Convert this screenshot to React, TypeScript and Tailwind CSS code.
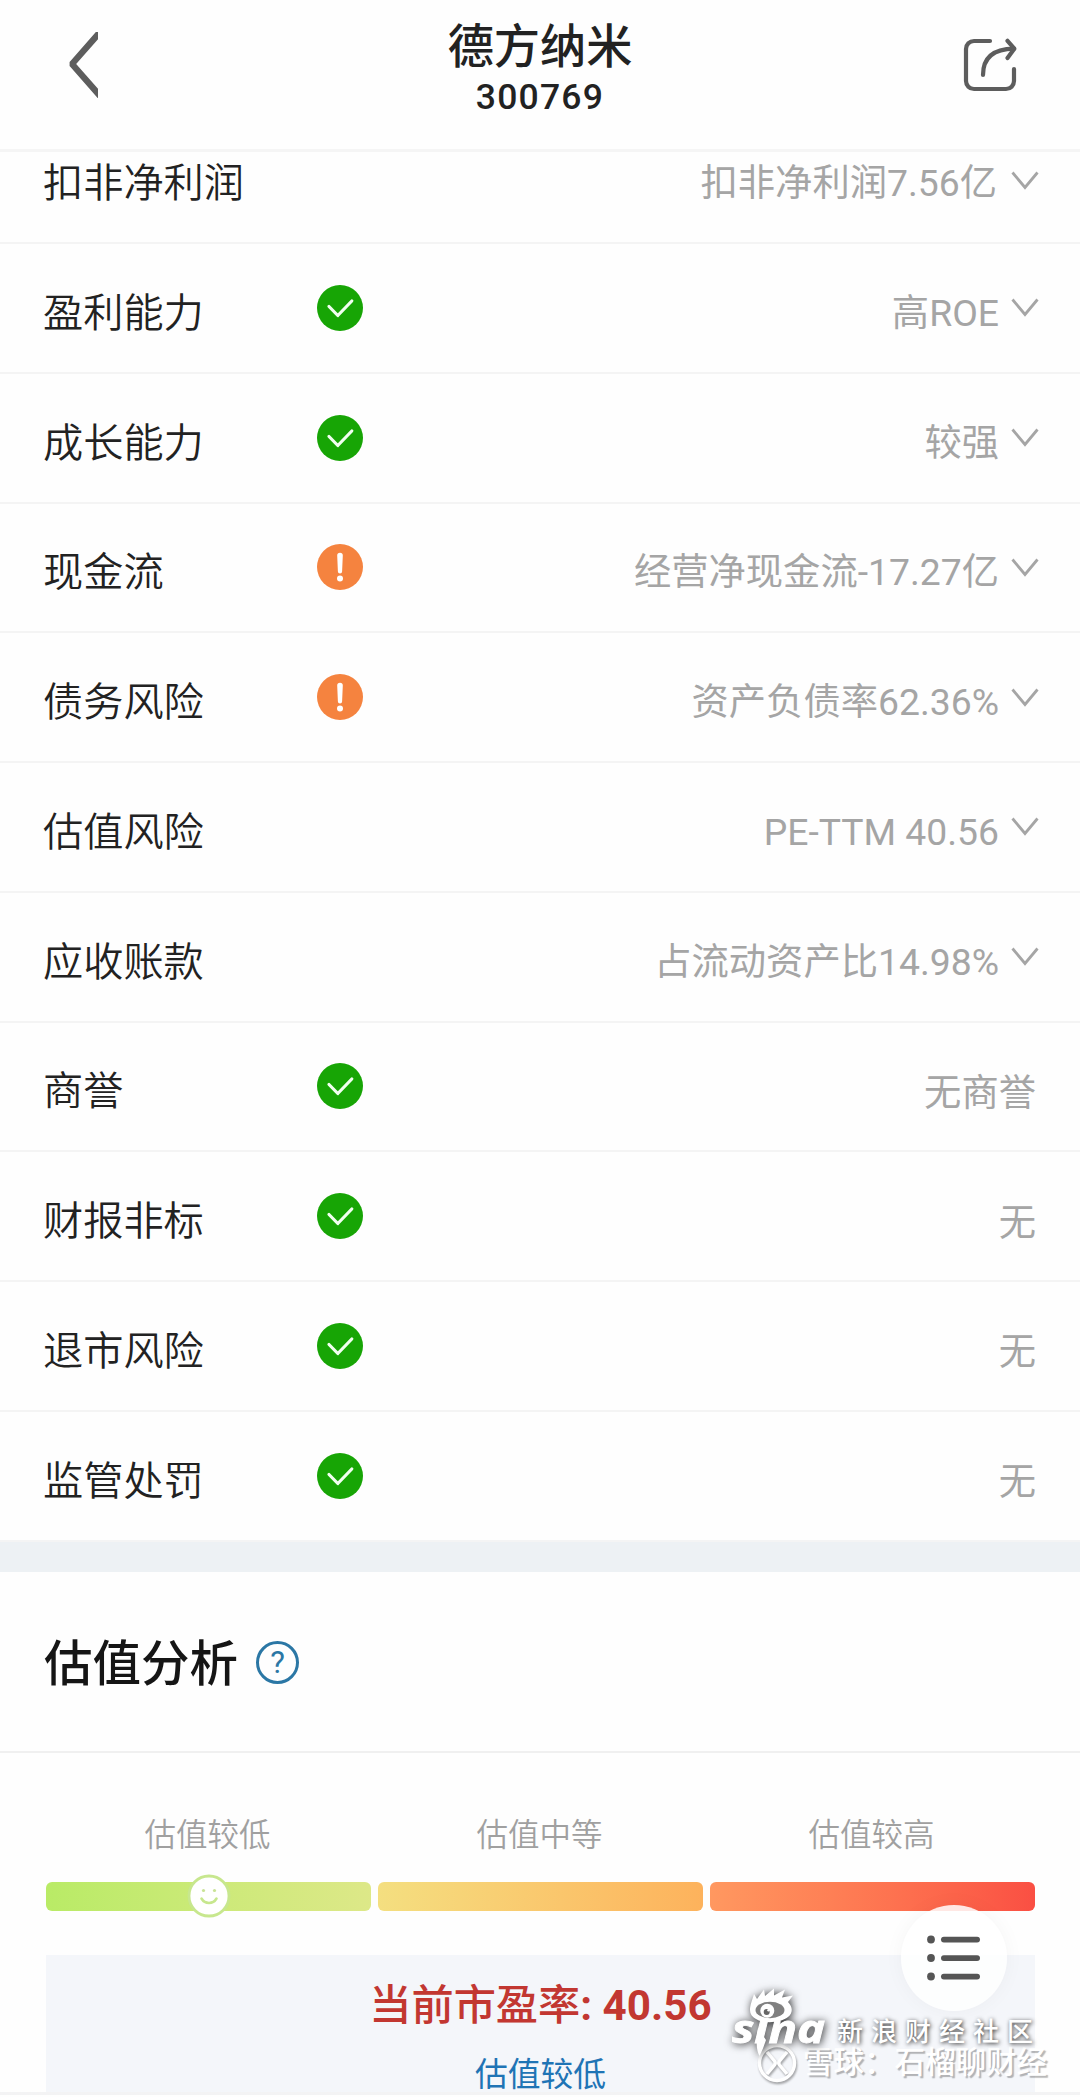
import { clsx } from 'clsx'

type Status = 'ok' | 'warn'

interface Row {
  label: string
  status?: Status
  value: string
  expandable?: boolean
}

const ROWS: Row[] = [
  { label: '盈利能力', status: 'ok', value: '高ROE', expandable: true },
  { label: '成长能力', status: 'ok', value: '较强', expandable: true },
  { label: '现金流', status: 'warn', value: '经营净现金流-17.27亿', expandable: true },
  { label: '债务风险', status: 'warn', value: '资产负债率62.36%', expandable: true },
  { label: '估值风险', value: 'PE-TTM 40.56', expandable: true },
  { label: '应收账款', value: '占流动资产比14.98%', expandable: true },
  { label: '商誉', status: 'ok', value: '无商誉' },
  { label: '财报非标', status: 'ok', value: '无' },
  { label: '退市风险', status: 'ok', value: '无' },
  { label: '监管处罚', status: 'ok', value: '无' },
]

const LEVELS = [
  { label: '估值较低', bar: 'bg-linear-to-r from-[#b9eb66] to-[#dde888]', active: true },
  { label: '估值中等', bar: 'bg-linear-to-r from-[#f4df80] to-[#fdb25c]' },
  { label: '估值较高', bar: 'bg-linear-to-r from-[#ff9860] to-[#fa4f43]' },
]

function BackIcon() {
  return (
    <svg className="h-[66px] w-[29px]" viewBox="0 0 29 66" fill="none" stroke="#5d5d5d" strokeWidth="6.4">
      <path d="M32 -1 L3 32 L32 65" strokeLinejoin="bevel" />
    </svg>
  )
}

function ShareIcon() {
  return (
    <svg className="h-[54px] w-[54px]" viewBox="0 0 54 54" fill="none" stroke="#5d5d5d" strokeWidth="4.2" strokeLinecap="round" strokeLinejoin="round">
      <path d="M27 3H11a8 8 0 0 0-8 8v32a8 8 0 0 0 8 8h32a8 8 0 0 0 8-8V31" />
      <path d="M20 37C20 19 31 11 51 10.700" />
      <path d="M44.500 2.800L51.300 10.700L44.500 20" />
    </svg>
  )
}

function StatusIcon({ status }: { status: Status }) {
  return (
    <svg className="h-[46px] w-[46px]" viewBox="0 0 46 46">
      <circle cx="23" cy="23" r="23" fill={status === 'ok' ? '#17a505' : '#f5833f'} />
      {status === 'ok' ? (
        <path d="M12 21.500L20.800 30.500L34.800 16" fill="none" stroke="#f1fff0" strokeWidth="3.200" strokeLinecap="round" strokeLinejoin="round" />
      ) : (
        <g fill="#fff">
          <path d="M20.200 11.500a2.800 2.800 0 0 1 5.600 0L25.100 27.500a2.100 2.100 0 0 1-4.200 0Z" />
          <circle cx="23" cy="34.500" r="3" />
        </g>
      )}
    </svg>
  )
}

function ChevronIcon() {
  return (
    <svg className="h-[19px] w-[28px]" viewBox="0 0 28 19" fill="none" stroke="#a5a5a5" strokeWidth="2.800">
      <path d="M1.500 1.500L14 16.500L26.500 1.500" />
    </svg>
  )
}

function MetricRow({ label, status, value, expandable }: Row) {
  return (
    <div className={clsx('flex h-[129.75px] items-center border-b-2 border-[#f4f4f4] pl-[43px]', expandable ? 'pr-[41px]' : 'pr-[44px]')}>
      <span className="w-[274px] pt-[12px] text-[40.2px] leading-[60px] font-[350] text-[#222]">{label}</span>
      {status && <StatusIcon status={status} />}
      <span className={clsx('ml-auto text-[37.3px] leading-[56px] text-[#a5a5a5]', expandable ? 'mr-[12px] pt-[10px]' : 'pt-[13px]')}>{value}</span>
      {expandable && <ChevronIcon />}
    </div>
  )
}

function SmileyMarker() {
  return (
    <svg className="absolute top-1/2 left-1/2 h-[44px] w-[44px] -translate-x-1/2 -translate-y-1/2" viewBox="0 0 44 44">
      <circle cx="22" cy="22" r="20" fill="#fff" stroke="#c7e78e" strokeWidth="2.800" />
      <circle cx="16.500" cy="16.500" r="1.600" fill="#c9e396" />
      <circle cx="27.500" cy="16.500" r="1.600" fill="#c9e396" />
      <path d="M14.500 24.500C18 30.500 26 30.500 29.500 24.500" fill="none" stroke="#c7e78e" strokeWidth="2.600" strokeLinecap="round" />
    </svg>
  )
}

function SinaLogo() {
  return (
    <svg className="absolute top-[1980px] left-[720px] h-[84px] w-[120px] overflow-visible drop-shadow-[1px_1px_4px_rgba(0,0,0,0.8)]" viewBox="0 0 120 84">
      <text x="12" y="62.500" fontSize="39" fontWeight="700" fontStyle="italic" fontFamily="Open Sans, sans-serif" fill="#fff" stroke="#fff" strokeWidth="0.8" textLength="93" lengthAdjust="spacingAndGlyphs">sina</text>
      <path d="M38 48L46 60C44 66 42 71 39.500 76C36 70 36 60 38 48Z" fill="#fff" />
      <path d="M30 30C30 25 32 21 34 14L37 19L44 9.500L45 16L54 8.500L54 15.500L65 9.500L62 17.500L73 15.500L68 22C73 27 73 33 68 37C60 43 44 44 36 39C32 37 30 34 30 30Z" fill="#fff" />
      <ellipse cx="50" cy="30" rx="14.500" ry="8.200" fill="#808080" />
      <circle cx="47.300" cy="30.800" r="7" fill="#fff" />
      <circle cx="46.700" cy="32" r="3" fill="#666" />
      <circle cx="48.500" cy="30.300" r="1.200" fill="#fff" />
    </svg>
  )
}

function SnowballLogo() {
  return (
    <svg className="h-[40px] w-[40px] drop-shadow-[1px_2px_1px_rgba(0,0,0,0.35)]" viewBox="0 0 40 40" fill="none" stroke="#fff" strokeWidth="3.400">
      <circle cx="20" cy="20" r="17.500" />
      <path d="M10 9L17.500 18Q19 20 17.500 22L10 31M30 9L22.500 18Q21 20 22.500 22L30 31" />
    </svg>
  )
}

export default function App() {
  return (
    <div className="relative h-[2097px] w-[1080px] overflow-hidden bg-[#fefefe] font-['Roboto','Noto_Sans_CJK_SC',sans-serif]">
      {/* Header */}
      <header className="flex h-[152px] items-start justify-between border-b-3 border-[#f5f5f5] pr-[63px] pl-[69px]">
        <div className="flex w-[54px] pt-[32px]">
          <BackIcon />
        </div>
        <div className="flex flex-col items-center pr-[6px] text-[#222]">
          <h1 className="mt-[14px] text-[46.2px] leading-[66px] font-medium">德方纳米</h1>
          <span className="-mt-[1px] text-[35.5px] leading-[36px] font-medium tracking-[1.2px]">300769</span>
        </div>
        <div className="pt-[38px]">
          <ShareIcon />
        </div>
      </header>

      {/* Diagnosis rows, the first one is scrolled under the header */}
      <div className="flex h-[92px] items-start justify-between border-b-2 border-[#f4f4f4] pr-[41px] pl-[43px]">
        <span className="pt-[2px] text-[40.2px] leading-[60px] font-[350] text-[#222]">扣非净利润</span>
        <div className="flex h-[56px] items-center">
          <span className="mr-[14px] pt-[7px] text-[37.3px] text-[#a5a5a5]">扣非净利润7.56亿</span>
          <ChevronIcon />
        </div>
      </div>
      {ROWS.map((row) => (
        <MetricRow key={row.label} {...row} />
      ))}

      <div className="h-[30px] bg-[#edf1f4]" />

      {/* Valuation */}
      <section>
        <div className="flex h-[181px] items-center gap-[18px] border-b-2 border-[#f0f0f0] pl-[44px]">
          <h2 className="pt-[8px] text-[48.500px] leading-[70px] font-medium text-[#151515]">估值分析</h2>
          <span className="mt-[3px] flex h-[43px] w-[43px] items-center justify-center rounded-full border-3 border-[#2b77a5] text-[31px] leading-none text-[#2b77a5]">?</span>
        </div>

        <div className="pt-[59px] pr-[45px] pl-[46px]">
          <div className="grid grid-cols-3 gap-[7px]">
            {LEVELS.map((level) => (
              <div key={level.label} className="flex flex-col items-center">
                <span className="pr-[2px] text-[31.500px] leading-[48px] font-[350] text-[#a0a0a0]">{level.label}</span>
                <div className={clsx('relative mt-[22px] h-[29px] w-full rounded-md', level.bar)}>{level.active && <SmileyMarker />}</div>
              </div>
            ))}
          </div>

          <div className="mt-[44px] flex h-[137px] flex-col items-center bg-[#f4f6fa] pt-[21px]">
            <p className="text-[42.2px] leading-[60px] font-bold text-[#c23731]">
              <span className="font-medium">当前市盈率</span>: 40.56
            </p>
            <p className="mt-[15px] text-[32.800px] leading-[48px] text-[#1f74b5]">估值较低</p>
          </div>
        </div>
        <div className="h-[3px] bg-[#f3f3f4]" />
      </section>

      {/* Floating menu button */}
      <button className="absolute top-[1905px] left-[901px] flex h-[106px] w-[106px] items-center justify-center rounded-full bg-white/85 shadow-[0_0_20px_rgba(0,0,0,0.04)]">
        <svg className="h-[46px] w-[54px]" viewBox="0 0 54 46" fill="#555">
          {[4.5, 23, 41.5].map((y) => (
            <g key={y}>
              <circle cx="4" cy={y} r="3.900" />
              <rect x="14" y={y - 2.8} width="39" height="5.800" rx="2.900" />
            </g>
          ))}
        </svg>
      </button>

      {/* Watermarks */}
      <div className="absolute top-[2043px] left-[757px] flex items-center gap-[6px] text-white">
        <SnowballLogo />
        <span className="text-[30.500px] leading-[40px] font-medium whitespace-nowrap [text-shadow:2px_2px_1px_rgba(0,0,0,0.28)]">雪球：石榴聊财经</span>
      </div>
      <SinaLogo />
      <span className="absolute top-[2013px] left-[837px] text-[26px] leading-[38px] font-medium tracking-[8px] whitespace-nowrap text-white [text-shadow:1px_1px_4px_rgba(0,0,0,0.85)]">新浪财经社区</span>
    </div>
  )
}
